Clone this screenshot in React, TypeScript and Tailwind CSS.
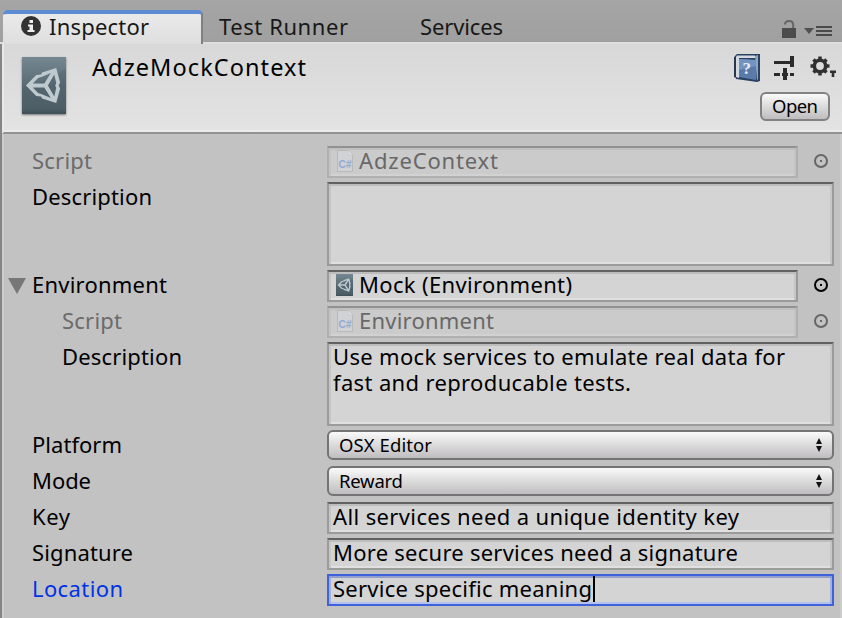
import { useLayoutEffect, useRef, useState, type ReactNode } from "react";

/** Single line of text whose tracking is adjusted to fill the given width. */
function Label({ w, className = "", children }: { w: number; className?: string; children: string }) {
  const ref = useRef<HTMLSpanElement>(null);
  const [spacing, setSpacing] = useState(0);
  useLayoutEffect(() => {
    const natural = ref.current!.getBoundingClientRect().width;
    setSpacing((w - natural) / (children.length - 1));
  }, [w, children]);
  return (
    <span ref={ref} className={`inline-block whitespace-pre ${className}`} style={{ letterSpacing: spacing }}>
      {children}
    </span>
  );
}

function UnityMark({ className }: { className: string }) {
  return (
    <svg viewBox="0 0 45 57" preserveAspectRatio="none" className={className}>
      <defs>
        <linearGradient id="tile" x1="0" y1="0" x2="0" y2="1">
          <stop offset="0" stopColor="#758790" />
          <stop offset="0.5" stopColor="#596b74" />
          <stop offset="0.9" stopColor="#51626a" />
          <stop offset="1" stopColor="#405057" />
        </linearGradient>
      </defs>
      <rect width="45" height="57" fill="url(#tile)" />
      <path d="M45 12 C35 16 28 26 0 30 V57 H45Z" fill="#3f5059" opacity=".18" />
      <path
        fillRule="evenodd"
        fill="#bfcace"
        d="M4 28.500 L14.500 18 L19.500 17.500 L20.500 15.500 L35 11 L39 25.500 L37.500 28.500 L39 31.500 L35 46 L20.500 41.500 L19.500 39.500 L14.500 39Z M11 26.500 H22.800 L29.500 16 L21 19.500 L16.500 21Z M11 30.500 L16.500 36 L21 37.500 L29.500 41 L22.800 30.500Z M26.500 28.500 L33 39.500 L35 31 L34 28.500 L35 26 L33 17.500Z"
      />
    </svg>
  );
}

function CSharpIcon() {
  return (
    <svg viewBox="0 0 16 22" className="h-[22px] w-4 shrink-0">
      <path d="M.5 .5H11L15.500 5V21.500H.5Z" fill="#d0d3d5" stroke="#b9babb" />
      <path d="M11 .5V5H15.500" fill="#dedede" stroke="#c5c6c6" strokeWidth=".7" />
      <text x="1.600" y="17.500" fontFamily="Liberation Sans, sans-serif" fontSize="10" fontWeight="700" fill="#94a8d4" textLength="13" lengthAdjust="spacingAndGlyphs">
        C#
      </text>
    </svg>
  );
}

function Picker({ dim = false }: { dim?: boolean }) {
  return (
    <svg viewBox="0 0 14 14" className={`ml-4 h-[14px] w-[14px] ${dim ? "text-[#666]" : "text-black"}`}>
      <circle cx="7" cy="7" r="6" fill="none" stroke="currentColor" strokeWidth="2" />
      <rect x="6" y="6" width="2" height="2" fill="currentColor" />
    </svg>
  );
}

function Row({ label, w, children, tone = "text-black", indent = false, fold = false, height = "h-8" }: {
  label: string; w: number; children: ReactNode; tone?: string; indent?: boolean; fold?: boolean; height?: string;
}) {
  return (
    <div className={`mb-1 flex items-start ${height}`}>
      <div className={`flex w-[323px] shrink-0 leading-[29px] ${tone} ${indent ? "pl-[58px]" : fold ? "pl-1" : "pl-7"}`}>
        {fold && (
          <svg viewBox="0 0 18 16" className="mr-[6px] mt-2 h-4 w-[18px]">
            <path d="M0 0H18L9 16Z" fill="#777" />
          </svg>
        )}
        <Label w={w}>{label}</Label>
      </div>
      {children}
    </div>
  );
}

const box = "box-border border-2 leading-[25px]";
const field = `${box} border-[#9b9b9b] border-t-[#616161] bg-[#d4d4d4] shadow-[inset_0_2px_0_#bdbdbd,inset_2px_0_0_#c6c6c6,inset_-2px_0_0_#c6c6c6,inset_0_-2px_0_#e0e0e0]`;
const dimField = `${box} border-[#b0b0b0] border-t-[#919191] bg-[#cbcbcb] text-[#686868] shadow-[inset_0_2px_0_#c0c0c0,inset_2px_0_0_#c4c4c4,inset_-2px_0_0_#c4c4c4,inset_0_-2px_0_#d2d2d2]`;
const focusField = `${box} border-[#3f62dc] bg-[#d4d4d4] shadow-[inset_0_2px_0_#929fca,inset_2px_0_0_#a3b0da,inset_-2px_0_0_#a3b0da,inset_0_-2px_0_#b3c1ec]`;

function Popup({ text, w }: { text: string; w: number }) {
  return (
    <div className="flex h-[30px] w-[507px] items-center justify-between rounded-[6px] border-2 border-[#747474] bg-linear-to-b from-[#fafafa] to-[#bfbdbf] pl-[10px] pr-[10px] text-[18.500px] leading-[26px]">
      <Label w={w}>{text}</Label>
      <svg viewBox="0 0 6 14" className="h-[14px] w-[6px]">
        <path d="M3 0L6 6H0ZM0 8H6L3 14Z" fill="#111" />
      </svg>
    </div>
  );
}

export default function App() {
  return (
    <div className="flex h-[618px] w-[842px] flex-col overflow-hidden bg-[#c2c2c2] font-['Noto_Sans',sans-serif] text-[22px] text-black">
      <div className="flex h-11 shrink-0 items-end border-b-2 border-[#dedede] bg-linear-to-b from-[#a5a5a5] to-[#a0a0a0] pl-[3px] text-[#181818]">
        <div className="mb-[-2px] flex h-[34px] w-[200px] overflow-hidden rounded-t-[5px] border-r-2 border-t-4 border-r-[#808080] border-t-[#5b8cd4] bg-linear-to-b from-[#eaeaea] to-[#dedede] pl-[18px]">
          <svg viewBox="0 0 20 20" className="mt-[2px] h-5 w-5">
            <circle cx="10" cy="10" r="10" fill="#323232" />
            <path d="M8.500 4H12V7H8.500ZM7 8.500H12V14H13.500V16H6.500V14H8.500V10.500H7Z" fill="#eee" />
          </svg>
          <div className="ml-2 mt-[-2px] leading-[29px]"><Label w={100}>Inspector</Label></div>
        </div>
        <div className="ml-4 h-[30px] w-[201px] leading-[29px]"><Label w={129}>Test Runner</Label></div>
        <div className="h-[30px] grow leading-[29px]"><Label w={83}>Services</Label></div>
        <svg viewBox="0 0 54 20" className="mr-[10px] mb-[3px] h-5 w-[54px]">
          <path d="M4 9H18V19H4Z" fill="#4c4c4c" />
          <path d="M7 5.500Q7 2 11 2Q15.200 2 15.200 6V9" fill="none" stroke="#666" strokeWidth="2" />
          <path d="M26 9H36L31 15Z" fill="#505050" />
          <path d="M38 8H54M38 12H54M38 16H54" stroke="#4a4a4a" strokeWidth="2" />
        </svg>
      </div>
      <div className="flex min-h-0 grow flex-col border-l-2 border-[#858585]">
        <div className="flex h-[90px] shrink-0 border-b-2 border-l-2 border-b-[#929292] border-l-[#e8e8e8] bg-linear-to-b from-[#d8d8d8] to-[#e3e3e3] shadow-[inset_0_-2px_0_#ebebeb]">
          <UnityMark className="ml-[18px] mt-[13px] h-[57px] w-[44px] shadow-[0_1px_2px_#777]" />
          <div className="ml-[26px] mt-[9px] grow text-[23.500px] leading-[29px]"><Label w={214}>AdzeMockContext</Label></div>
          <div className="flex flex-col items-end">
            <div className="mr-[6px] mt-[10px] flex h-7 items-start">
              <svg viewBox="0 0 26 28" className="h-7 w-[26px]">
                <path d="M1 2L3 0H26V27L23 28L2 25Z" fill="#2a4163" />
                <path d="M3 1.500H21V4H5V24L2 23V3Z" fill="#d3d9df" />
                <path d="M21 2L24 1V25L23 26.500Z" fill="#8fa5c4" />
                <path d="M5 5L22 6V26L5 23Z" fill="#587ba9" />
                <path d="M5 5L22 6V12L5 16Z" fill="#7394be" />
                <path d="M0 3L2 2V24L0 23Z" fill="#26374f" />
                <text x="8.500" y="20" fontFamily="Liberation Serif, serif" fontWeight="700" fontSize="17" fill="#e6eef8">?</text>
              </svg>
              <svg viewBox="0 0 20 24" className="ml-[14px] mt-[2px] h-6 w-5">
                <path d="M0 6.500H14M0 18.500H6M16 18.500H20" stroke="#2b2b2b" strokeWidth="3" />
                <path d="M18 0V11M11 12V24" stroke="#2b2b2b" strokeWidth="4" />
                <path d="M8 18.500H14M14 6.500H18" stroke="#2b2b2b" strokeWidth="3" />
              </svg>
              <svg viewBox="0 0 26 24" className="ml-[16px] mt-[2px] h-6 w-[26px]">
                <circle cx="10" cy="10" r="5.700" fill="none" stroke="#303030" strokeWidth="3.600" />
                <g stroke="#303030" strokeWidth="3.500">
                  <path d="M10 .5V4M10 16V19.500M.5 10H4M16 10H19.500M3.500 3.500L6 6M14 14L16.500 16.500M3.500 16.500L6 14M14 6L16.500 3.500" />
                </g>
                <path d="M20 14.500H26V17H24.300V21H21.700V17H20Z" fill="#303030" />
              </svg>
            </div>
            <div className="mr-3 mt-[10px] flex h-[29px] w-[70px] items-center rounded-[6px] border-2 border-[#828282] bg-linear-to-b from-[#fafafa] to-[#bfbdbf] pl-[10px] text-[18.500px] leading-[25px]"><div className="mt-[-2px]"><Label w={46}>Open</Label></div></div>
          </div>
        </div>
        <div className="min-h-0 grow border-x-2 border-[#cccccc] pt-3">
          <Row label="Script" w={60} tone="text-[#6b6b6b]">
            <div className={`flex h-8 w-[471px] items-start pl-2 ${dimField}`}>
              <div className="mt-[2px] h-[22px]"><CSharpIcon /></div>
              <div className="ml-[6px]"><Label w={139}>AdzeContext</Label></div>
            </div>
            <div className="mt-2"><Picker dim /></div>
          </Row>
          <Row label="Description" w={120} height="h-[84px]"><div className={`h-[84px] w-[507px] ${field}`} /></Row>
          <Row label="Environment" w={135} fold>
            <div className={`flex h-8 w-[471px] items-start pl-[7px] ${field}`}>
              <UnityMark className="mt-[2px] h-[22px] w-[17px]" />
              <div className="ml-[6px]"><Label w={213}>Mock (Environment)</Label></div>
            </div>
            <div className="mt-2"><Picker /></div>
          </Row>
          <Row label="Script" w={60} tone="text-[#6b6b6b]" indent>
            <div className={`flex h-8 w-[471px] items-start pl-2 ${dimField}`}>
              <div className="mt-[2px] h-[22px]"><CSharpIcon /></div>
              <div className="ml-[6px]"><Label w={135}>Environment</Label></div>
            </div>
            <div className="mt-2"><Picker dim /></div>
          </Row>
          <Row label="Description" w={120} height="h-[84px]" indent>
            <div className={`flex h-[84px] w-[507px] flex-col items-start pl-1 ${field}`}>
              <Label w={452} className="h-[26px]">Use mock services to emulate real data for</Label>
              <Label w={298} className="h-[26px]">fast and reproducable tests.</Label>
            </div>
          </Row>
          <Row label="Platform" w={90}><Popup text="OSX Editor" w={93} /></Row>
          <Row label="Mode" w={59}><Popup text="Reward" w={64} /></Row>
          <Row label="Key" w={38}><div className={`h-8 w-[507px] pl-1 ${field}`}><Label w={406}>All services need a unique identity key</Label></div></Row>
          <Row label="Signature" w={101}><div className={`h-8 w-[507px] pl-1 ${field}`}><Label w={405}>More secure services need a signature</Label></div></Row>
          <Row label="Location" w={91} tone="text-[#0032e6]">
            <div className={`flex h-8 w-[507px] pl-1 ${focusField}`}>
              <div className="w-[260px]"><Label w={259}>Service specific meaning</Label></div>
              <div className="h-[26px] w-[2px] bg-black" />
            </div>
          </Row>
        </div>
      </div>
    </div>
  );
}
